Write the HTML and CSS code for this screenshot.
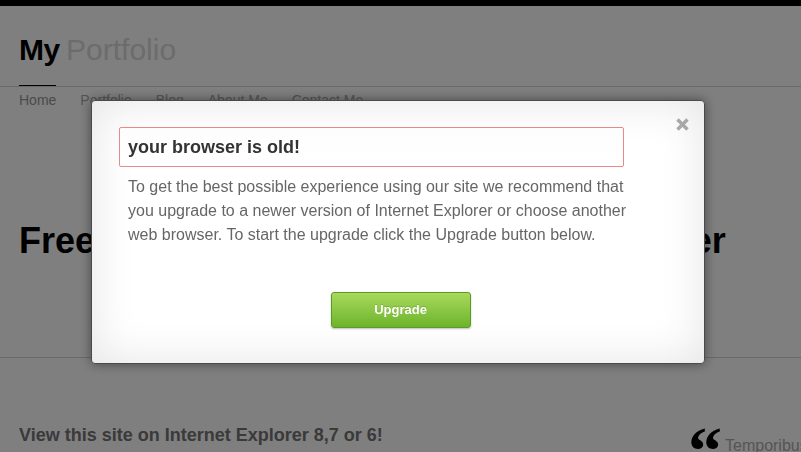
FILE: index.html
```html
<!DOCTYPE html>
<html lang="en">
<head>
<meta charset="utf-8">
<title>My Portfolio</title>
<link rel="stylesheet" href="styles.css">
</head>
<body>
<div class="topbar"></div>
<header class="site-header">
  <div class="logo"><span class="logo-strong">My</span> <span class="logo-light">Portfolio</span></div>
</header>
<nav class="nav">
  <a class="nav-item active" href="#">Home</a>
  <a class="nav-item" href="#">Portfolio</a>
  <a class="nav-item" href="#">Blog</a>
  <a class="nav-item" href="#">About Me</a>
  <a class="nav-item" href="#">Contact Me</a>
</nav>
<section class="hero">
  <h1 class="hero-title">Free Portfolio Template for Web Designer</h1>
</section>
<section class="content">
  <div class="col-main">
    <h3 class="notice">View this site on Internet Explorer 8,7 or 6!</h3>
  </div>
  <div class="col-side">
    <span class="quote-mark">&#8220;</span><span class="quote-text">Temporibus autem quibusdam</span>
  </div>
</section>

<div class="overlay"></div>
<div class="modal">
  <div class="modal-close">
    <svg width="13" height="13" viewBox="0 0 13 13"><path d="M1.5 1.5 L11.5 11.5 M11.5 1.5 L1.5 11.5" stroke="#a8a8a8" stroke-width="3.4" fill="none"/></svg>
  </div>
  <div class="modal-title">your browser is old!</div>
  <p class="modal-text">To get the best possible experience using our site we recommend that you upgrade to a newer version of Internet Explorer or choose another web browser. To start the upgrade click the Upgrade button below.</p>
  <div class="modal-footer">
    <a class="btn-upgrade" href="#">Upgrade</a>
  </div>
</div>
</body>
</html>
```

FILE: styles.css
```css
html, body {
  margin: 0;
  padding: 0;
}
body {
  background: #ffffff;
  font-family: "Liberation Sans", Arial, sans-serif;
  width: 801px;
  height: 452px;
  overflow: hidden;
}
.topbar {
  height: 6px;
  background: #000;
}
.site-header {
  height: 80px;
  padding: 0 19px;
  box-sizing: border-box;
  padding-top: 27px;
}
.logo {
  font-size: 30px;
  line-height: 34px;
}
.logo-strong {
  font-weight: bold;
  color: #000;
  letter-spacing: -0.5px;
}
.logo-light {
  color: #d8d8d8;
  margin-left: -2px;
}
.nav {
  border-top: 1px solid #d2d2d2;
  padding: 5px 19px 0;
  display: flex;
  gap: 24px;
  height: 30px;
}
.nav-item {
  position: relative;
  font-size: 14px;
  line-height: 16px;
  color: #aaaaaa;
  text-decoration: none;
}
.nav-item.active {
  color: #969696;
}
.nav-item.active::before {
  content: "";
  position: absolute;
  left: 0;
  right: 0;
  top: -7px;
  height: 1px;
  background: #000;
}
.hero {
  height: 236px;
  box-sizing: border-box;
  padding: 101px 19px 0;
  border-bottom: 1px solid #d2d2d2;
}
.hero-title {
  margin: 0;
  font-size: 36px;
  line-height: 36px;
  font-weight: bold;
  color: #000;
  white-space: nowrap;
}
.content {
  display: flex;
  padding: 67px 0 0 19px;
}
.col-main {
  width: 671px;
  flex: none;
}
.notice {
  margin: 0;
  font-size: 18px;
  line-height: 20px;
  font-weight: bold;
  color: #747474;
}
.col-side {
  white-space: nowrap;
  display: flex;
  align-items: flex-start;
}
.quote-mark {
  font-family: "Liberation Serif", "Times New Roman", serif;
  font-weight: bold;
  font-size: 68px;
  line-height: 40px;
  color: #000;
  margin-left: -2px;
  margin-right: 3px;
  margin-top: 6px;
}
.quote-text {
  font-size: 16px;
  line-height: 20px;
  color: #aaaaaa;
  margin-top: 11px;
}
.overlay {
  position: fixed;
  inset: 0;
  top: 6px;
  background: rgba(0, 0, 0, 0.5);
}
.modal {
  position: fixed;
  left: 91px;
  top: 100px;
  width: 614px;
  height: 264px;
  box-sizing: border-box;
  background: #fff;
  border: 1px solid #4a4a4a;
  border-radius: 4px;
  box-shadow: inset 0 0 45px rgba(0, 0, 0, 0.11), 0 0 12px rgba(0, 0, 0, 0.45);
  padding: 26px 80px 0 27px;
}
.modal-close {
  position: absolute;
  top: 17px;
  right: 15px;
  width: 13px;
  height: 13px;
  display: flex;
}
.modal-title {
  height: 40px;
  box-sizing: border-box;
  border: 1px solid #e88a8a;
  border-radius: 2px;
  background: linear-gradient(#fdfdfd, #ffffff);
  padding: 0 8px;
  font-size: 18px;
  line-height: 38px;
  font-weight: bold;
  color: #333;
}
.modal-text {
  margin: 8px 0 0;
  padding-left: 9px;
  width: 512px;
  font-size: 16px;
  line-height: 24px;
  color: #666;
}
.modal-footer {
  display: flex;
  justify-content: center;
  padding-left: 58px;
  margin-top: 45px;
}
.btn-upgrade {
  display: block;
  width: 140px;
  height: 36px;
  box-sizing: border-box;
  border: 1px solid #5b9a24;
  border-radius: 3px;
  background: linear-gradient(#a8d95c, #6db42a);
  box-shadow: 0 1px 2px rgba(0, 0, 0, 0.25);
  color: #fff;
  text-decoration: none;
  text-align: center;
  font-size: 13px;
  font-weight: bold;
  line-height: 34px;
  text-shadow: 0 -1px 0 rgba(0, 0, 0, 0.15);
}
```
